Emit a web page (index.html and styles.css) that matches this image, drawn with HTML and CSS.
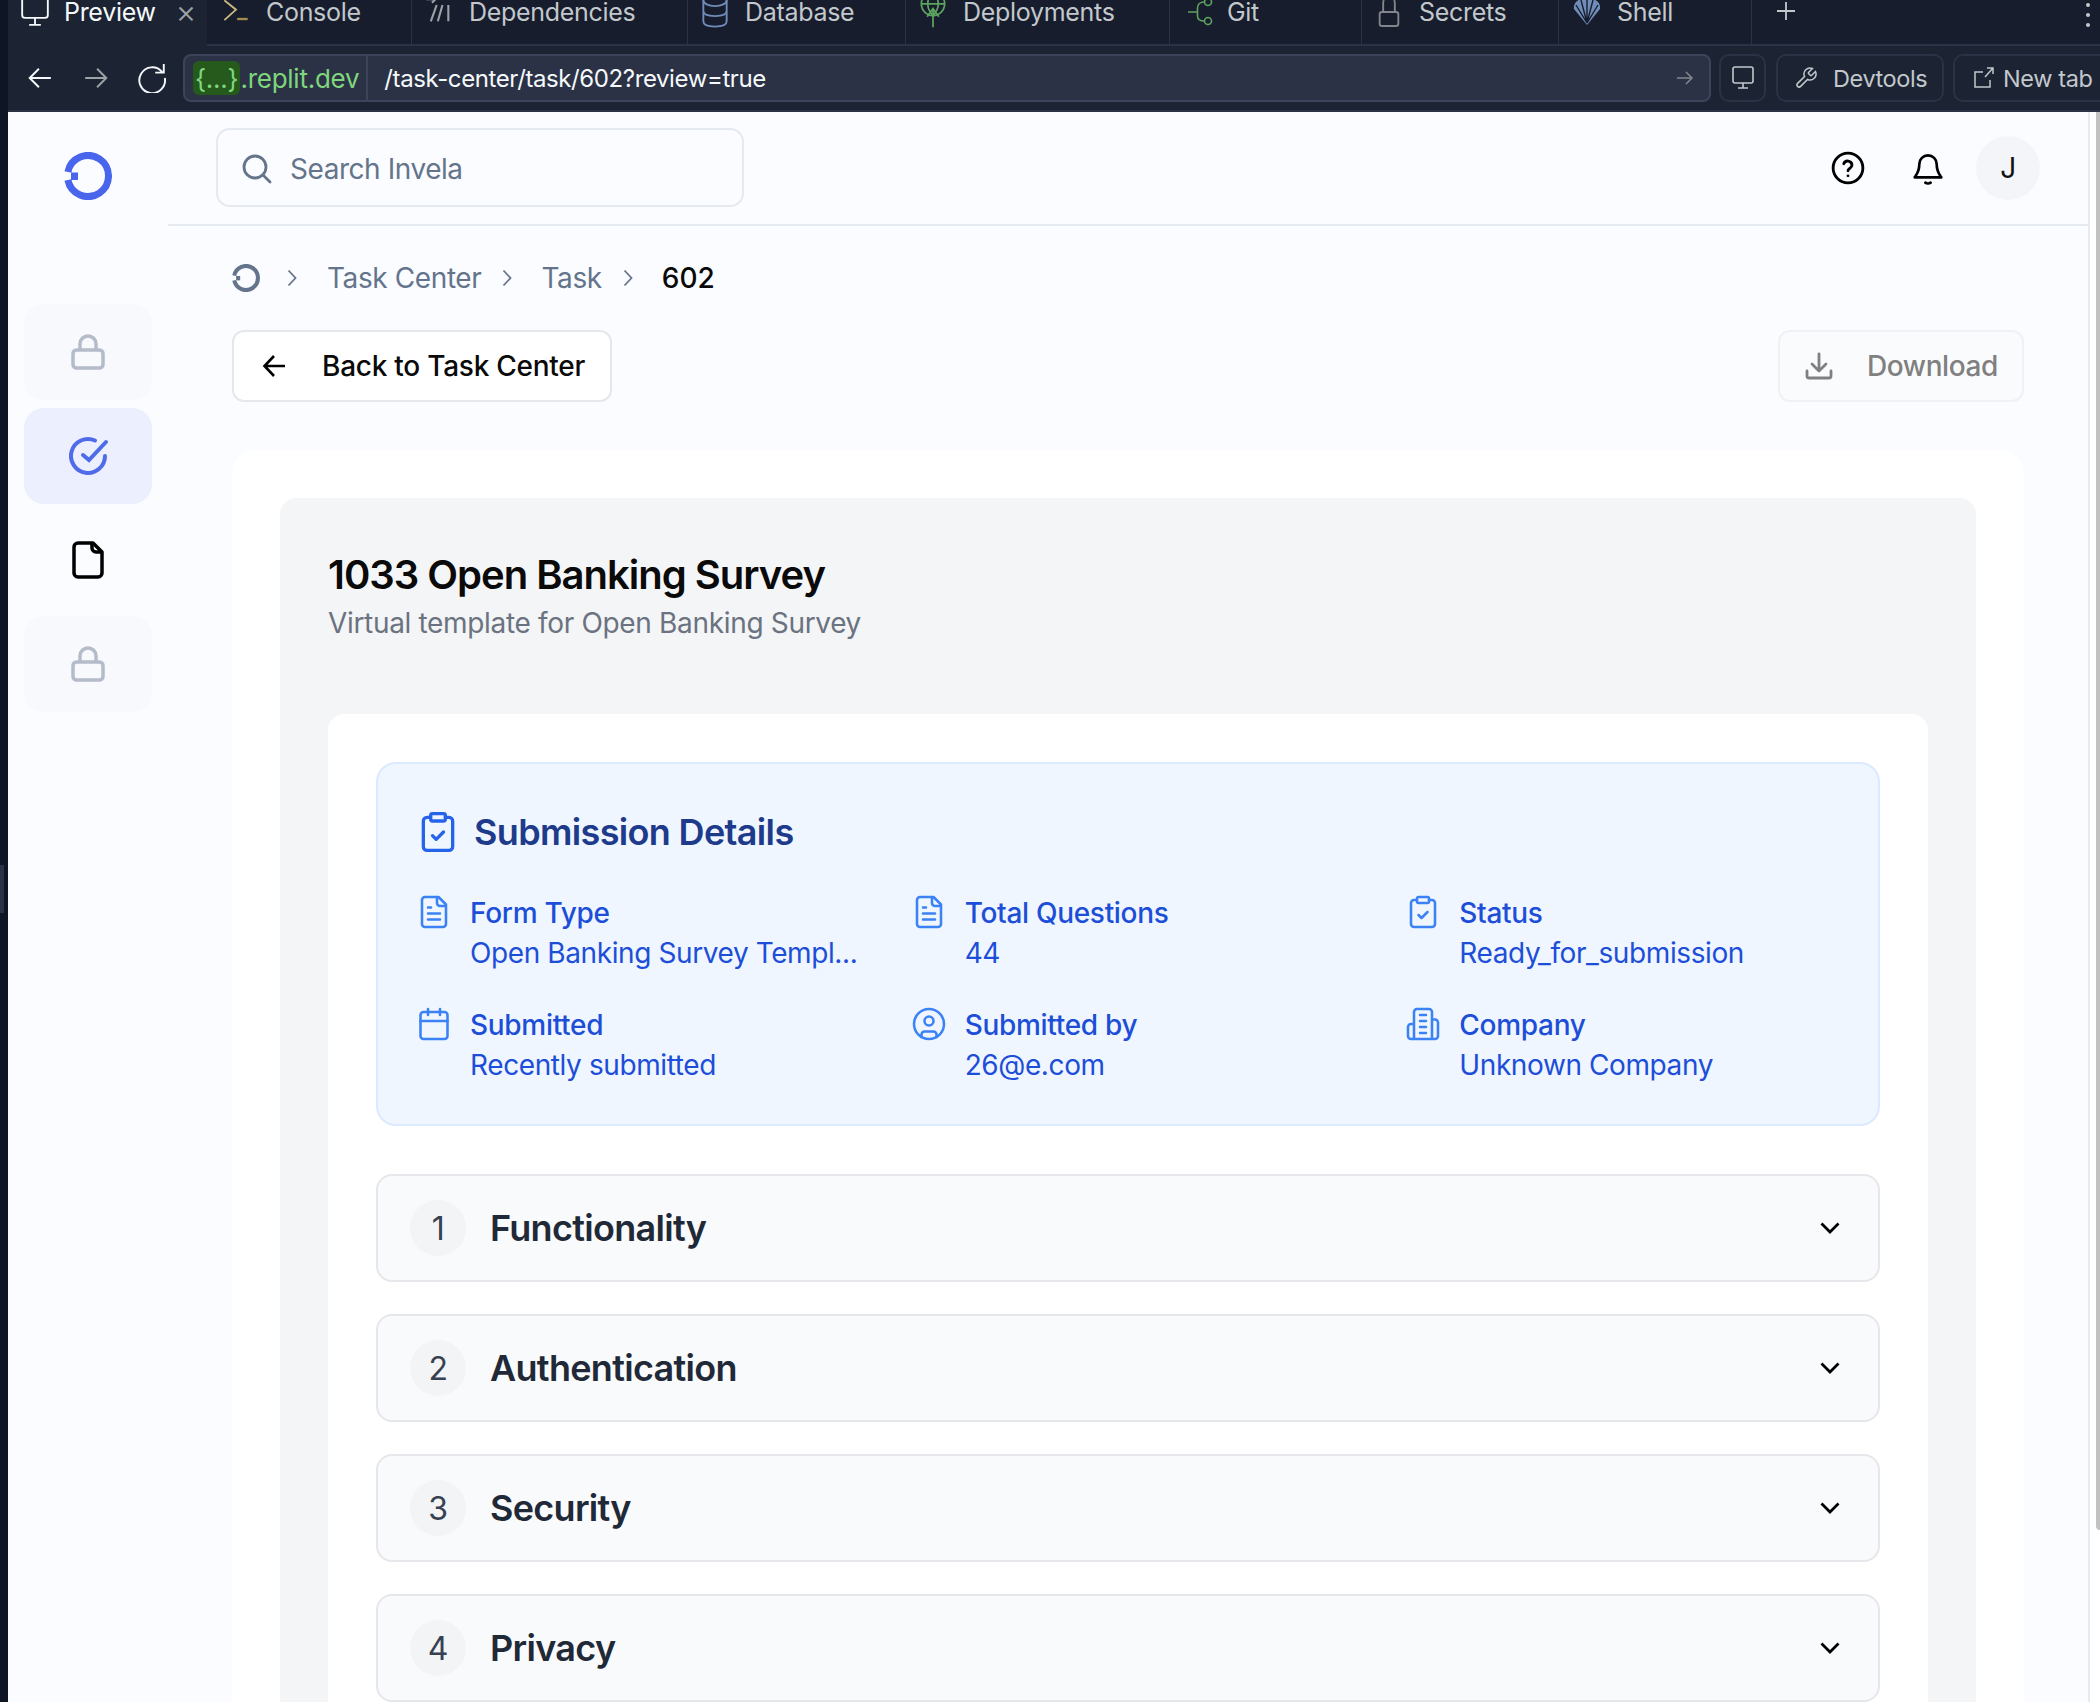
FILE: index.html

```html
<!DOCTYPE html>
<html lang="en">
  <head>
    <meta charset="utf-8">
    <title>Invela - Task 602</title>
    <link rel="stylesheet" href="styles.css">
  </head>
  <body>
    <div class="drag-handle"></div>

    <!-- Replit tab strip -->
    <div class="tabs">
      <div class="tab tab-active tab-preview">
        <svg class="tab-icon" viewBox="0 0 24 24" fill="none" stroke="#f5f9fc" stroke-width="1.6"><rect x="1" y="-2" width="22" height="19" rx="2.500"/><path d="M12 17v6M7 23h10"/></svg>
        <span>Preview</span>
        <span class="tab-close">×</span>
      </div>
      <div class="tab tab-console">
        <svg class="tab-icon" viewBox="0 0 24 24" fill="none" stroke="#c9b77d" stroke-width="1.6"><path d="M2 2l10 8-10 9"/><path d="M13 18h9" stroke="#a38d4a" stroke-width="2"/></svg>
        <span>Console</span>
      </div>
      <div class="tab tab-deps">
        <svg class="tab-icon" viewBox="0 0 24 24" fill="none" stroke="#9da2a6" stroke-width="1.8"><path d="M10 6L5 20M15 6l-4 14M20 6v14M1 1h7M5.500 -2L9 1 6 4"/></svg>
        <span>Dependencies</span>
      </div>
      <div class="tab tab-db">
        <svg class="tab-icon" viewBox="0 0 24 24" fill="none" stroke="#6f8db8" stroke-width="1.6"><ellipse cx="12" cy="2" rx="10" ry="5"/><path d="M2 2v18c0 3 4 4.500 10 4.500s10-1.500 10-4.500V2M2 11c0 3 4 4.500 10 4.500s10-1.500 10-4.500"/></svg>
        <span>Database</span>
      </div>
      <div class="tab tab-deploy">
        <svg class="tab-icon" viewBox="0 0 24 24" fill="none" stroke="#5da35f" stroke-width="1.5"><circle cx="12" cy="5" r="10"/><path d="M2 5h20M12 -5c-6 6-6 14 0 20M12 -5c6 6 6 14 0 20M12 25V9M7 16l5-7 5 7"/></svg>
        <span>Deployments</span>
      </div>
      <div class="tab tab-git">
        <svg class="tab-icon" viewBox="0 0 28 24" fill="none" stroke="#5da35f" stroke-width="1.6"><circle cx="21" cy="2" r="3.500"/><circle cx="21" cy="21" r="3.500"/><path d="M1 12h9M17.500 2c-5 0-7 3-7 6v8c0 3 2 5 7 5"/></svg>
        <span>Git</span>
      </div>
      <div class="tab tab-secrets">
        <svg class="tab-icon" viewBox="0 0 24 24" fill="none" stroke="#82868c" stroke-width="1.6"><path d="M7 12V5c0-4 2-7 5-7s5 3 5 7v7"/><rect x="4" y="12" width="16" height="12" rx="2"/></svg>
        <span>Secrets</span>
      </div>
      <div class="tab tab-shell">
        <svg class="tab-icon" viewBox="0 0 28 28" fill="#6f8db8"><path d="M14 27L1 11C0 5 5 0 14 0s14 5 13 11z"/><path d="M14 25L8 2M14 25V1M14 25l6-23M14 25L3 7M14 25L25 7" stroke="#171d2d" stroke-width="1.400"/></svg>
        <span>Shell</span>
      </div>
      <div class="tab-add">
        <svg width="20" height="20" viewBox="0 0 20 20" stroke="#c2c8cc" stroke-width="1.800"><path d="M10 1v18M1 10h18"/></svg>
      </div>
      <div class="tab-more"><i></i><i></i><i></i></div>
    </div>

    <!-- address bar -->
    <div class="navbar">
      <svg class="nav-btn" viewBox="0 0 24 24" fill="none" stroke="#f5f9fc" stroke-width="1.800"><path d="M22 12H3M11 3.500L2.500 12l8.500 8.500"/></svg>
      <svg class="nav-btn nav-forward" viewBox="0 0 24 24" fill="none" stroke="#9da2a6" stroke-width="1.800"><path d="M2 12h19M13 3.500l8.500 8.500-8.500 8.500"/></svg>
      <svg class="nav-btn nav-reload" viewBox="0 0 28 28" fill="none" stroke="#f5f9fc" stroke-width="1.800"><path d="M23.500 8.500A12 12 0 1 0 26 14M25 1v8h-8"/></svg>
      <div class="urlbar">
        <span class="url-domain"><span class="url-pill">{...}</span>.replit.dev</span>
        <span class="url-path">/task-center/task/602?review=true</span>
        <svg class="url-go" viewBox="0 0 18 18" fill="none" stroke="#82868c" stroke-width="1.500"><path d="M1 9h15M10 3l6 6-6 6"/></svg>
      </div>
      <div class="nav-box nav-monitor">
        <svg width="24" height="26" viewBox="0 0 24 26" fill="none" stroke="#c2c8cc" stroke-width="1.600"><rect x="2" y="2" width="20" height="16" rx="2"/><path d="M12 18v5M7 23h10"/></svg>
      </div>
      <div class="nav-box nav-devtools">
        <svg width="24" height="28" viewBox="0 0 24 24" fill="none" stroke="#c2c8cc" stroke-width="1.500"><path d="M14.700 6.300a1 1 0 0 0 0 1.400l1.600 1.600a1 1 0 0 0 1.400 0l3.770-3.770a6 6 0 0 1-7.940 7.940l-6.910 6.910a2.120 2.120 0 0 1-3-3l6.910-6.910a6 6 0 0 1 7.940-7.940l-3.760 3.760z"/></svg>
        <span>Devtools</span>
      </div>
      <div class="nav-box nav-newtab">
        <svg width="22" height="24" viewBox="0 0 22 24" fill="none" stroke="#c2c8cc" stroke-width="1.500"><path d="M17 14v7H2V6h8M12 11L20 2M14 2h6v6"/></svg>
        <span>New tab</span>
      </div>
    </div>

    <div class="app">
      <div class="sidebar">
        <div class="logo">
          <svg width="48" height="48" viewBox="0 0 48 48" fill="none"><path d="M3.900 28A20.500 20.500 0 1 0 3.900 20" stroke="#4965ec" stroke-width="7"/><rect x="7" y="20.500" width="7" height="7.500" fill="#4965ec"/></svg>
        </div>
        <div class="nav-item nav-locked">
          <svg class="lock-icon" viewBox="0 0 34 36" fill="none" stroke="#b4bbc9" stroke-width="3.500"><path d="M9 16V10a8 8 0 0 1 16 0v6"/><rect x="2" y="16" width="30" height="18" rx="3.500"/></svg>
        </div>
        <div class="nav-item nav-active">
          <svg class="check-icon" width="40" height="40" viewBox="0 0 40 40" fill="none" stroke="#4f6bea" stroke-width="4" stroke-linecap="round"><path d="M36 20A17 17 0 1 1 26 4.500"/><path d="M14 19l6 5L37 6"/></svg>
        </div>
        <div class="nav-item">
          <svg width="32" height="38" viewBox="0 0 32 38" fill="none" stroke="#000" stroke-width="3.500" stroke-linejoin="round"><path d="M21 2H6a4 4 0 0 0-4 4v26a4 4 0 0 0 4 4h20a4 4 0 0 0 4-4V11z"/><path d="M20 2v5a4 4 0 0 0 4 4h6"/></svg>
        </div>
        <div class="nav-item nav-locked">
          <svg class="lock-icon" viewBox="0 0 34 36" fill="none" stroke="#b4bbc9" stroke-width="3.500"><path d="M9 16V10a8 8 0 0 1 16 0v6"/><rect x="2" y="16" width="30" height="18" rx="3.500"/></svg>
        </div>
      </div>

      <div class="content">
        <div class="topbar">
          <div class="search">
            <svg width="32" height="32" viewBox="0 0 32 32" fill="none" stroke="#64748b" stroke-width="2.800" stroke-linecap="round"><circle cx="14" cy="14" r="11"/><path d="M22 22l7 7"/></svg>
            <span>Search Invela</span>
          </div>
          <div class="top-actions">
            <svg class="help-icon" width="34" height="34" viewBox="0 0 24 24" fill="none" stroke="#000" stroke-width="2" stroke-linecap="round"><circle cx="12" cy="12" r="10.500"/><path d="M9 9a3 3 0 0 1 5.800 1c0 2-2.800 2.500-2.800 4M12 17.500h.01"/></svg>
            <svg width="32" height="34" viewBox="0 0 24 24" fill="none" stroke="#000" stroke-width="2" stroke-linecap="round" stroke-linejoin="round"><path d="M5.500 9a6.500 6.500 0 0 1 13 0c0 6 2.500 8.500 3.500 10H2c1-1.500 3.500-4 3.500-10zM10 23c1 .7 3 .7 4 0"/></svg>
            <div class="avatar">J</div>
          </div>
        </div>

        <div class="page">
          <div class="crumbs">
            <svg width="28" height="28" viewBox="0 0 48 48" fill="none"><path d="M3.900 28A20.500 20.500 0 1 0 3.900 20" stroke="#64748b" stroke-width="7"/><rect x="7" y="20.500" width="7" height="7.500" fill="#64748b"/></svg>
            <svg class="crumb-sep crumb-sep-first" viewBox="0 0 10 18" fill="none" stroke="#64748b" stroke-width="1.800"><path d="M1.500 1.500L8.500 9l-7 7.500"/></svg>
            <span>Task Center</span>
            <svg class="crumb-sep" viewBox="0 0 10 18" fill="none" stroke="#64748b" stroke-width="1.800"><path d="M1.500 1.500L8.500 9l-7 7.500"/></svg>
            <span>Task</span>
            <svg class="crumb-sep" viewBox="0 0 10 18" fill="none" stroke="#64748b" stroke-width="1.800"><path d="M1.500 1.500L8.500 9l-7 7.500"/></svg>
            <span class="crumb-current">602</span>
          </div>

          <div class="actions">
            <div class="btn btn-back">
              <svg width="24" height="24" viewBox="0 0 24 24" fill="none" stroke="#000" stroke-width="2.600"><path d="M23 12H3M12 2L2.500 12 12 22"/></svg>
              <span>Back to Task Center</span>
            </div>
            <div class="btn btn-download">
              <svg width="28" height="28" viewBox="0 0 28 28" fill="none" stroke="#808080" stroke-width="2.800" stroke-linecap="round" stroke-linejoin="round"><path d="M14 2v16M7 12l7 7 7-7M2 19v5a2 2 0 0 0 2 2h20a2 2 0 0 0 2-2v-5"/></svg>
              <span>Download</span>
            </div>
          </div>

          <div class="sheet">
            <div class="panel">
              <h1>1033 Open Banking Survey</h1>
              <p class="subtitle">Virtual template for Open Banking Survey</p>

              <div class="form-card">
                <div class="details">
                  <div class="details-head">
                    <svg width="44" height="44" viewBox="0 0 24 24" fill="none" stroke="#2563eb" stroke-width="1.800" stroke-linecap="round" stroke-linejoin="round"><rect x="8" y="2" width="8" height="4" rx="1"/><path d="M16 4h2a2 2 0 0 1 2 2v14a2 2 0 0 1-2 2H6a2 2 0 0 1-2-2V6a2 2 0 0 1 2-2h2M9 14l2 2 4-4"/></svg>
                    <h2>Submission Details</h2>
                  </div>
                  <div class="details-grid">
                    <div class="detail">
                      <svg class="detail-icon" viewBox="0 0 24 24" fill="none" stroke="#3b82f6" stroke-width="1.700" stroke-linecap="round" stroke-linejoin="round"><path d="M15 2H6a2 2 0 0 0-2 2v16a2 2 0 0 0 2 2h12a2 2 0 0 0 2-2V7zM14 2v4a2 2 0 0 0 2 2h4M10 9H8M16 13H8M16 17H8"/></svg>
                      <div><div class="detail-label">Form Type</div><div class="detail-value">Open Banking Survey Templ...</div></div>
                    </div>
                    <div class="detail">
                      <svg class="detail-icon" viewBox="0 0 24 24" fill="none" stroke="#3b82f6" stroke-width="1.700" stroke-linecap="round" stroke-linejoin="round"><path d="M15 2H6a2 2 0 0 0-2 2v16a2 2 0 0 0 2 2h12a2 2 0 0 0 2-2V7zM14 2v4a2 2 0 0 0 2 2h4M10 9H8M16 13H8M16 17H8"/></svg>
                      <div><div class="detail-label">Total Questions</div><div class="detail-value">44</div></div>
                    </div>
                    <div class="detail">
                      <svg class="detail-icon" viewBox="0 0 24 24" fill="none" stroke="#3b82f6" stroke-width="1.700" stroke-linecap="round" stroke-linejoin="round"><rect x="8" y="2" width="8" height="4" rx="1"/><path d="M16 4h2a2 2 0 0 1 2 2v14a2 2 0 0 1-2 2H6a2 2 0 0 1-2-2V6a2 2 0 0 1 2-2h2M9 14l2 2 4-4"/></svg>
                      <div><div class="detail-label">Status</div><div class="detail-value">Ready_for_submission</div></div>
                    </div>
                    <div class="detail">
                      <svg class="detail-icon" viewBox="0 0 24 24" fill="none" stroke="#3b82f6" stroke-width="1.700" stroke-linecap="round" stroke-linejoin="round"><rect x="3" y="4" width="18" height="18" rx="2"/><path d="M8 2v4M16 2v4M3 10h18"/></svg>
                      <div><div class="detail-label">Submitted</div><div class="detail-value">Recently submitted</div></div>
                    </div>
                    <div class="detail">
                      <svg class="detail-icon" viewBox="0 0 24 24" fill="none" stroke="#3b82f6" stroke-width="1.700" stroke-linecap="round" stroke-linejoin="round"><circle cx="12" cy="12" r="10"/><circle cx="12" cy="10" r="3"/><path d="M7 20.700V19a2 2 0 0 1 2-2h6a2 2 0 0 1 2 2v1.700"/></svg>
                      <div><div class="detail-label">Submitted by</div><div class="detail-value">26@e.com</div></div>
                    </div>
                    <div class="detail">
                      <svg class="detail-icon" viewBox="0 0 24 24" fill="none" stroke="#3b82f6" stroke-width="1.700" stroke-linecap="round" stroke-linejoin="round"><path d="M6 22V4a2 2 0 0 1 2-2h8a2 2 0 0 1 2 2v18zM6 12H4a2 2 0 0 0-2 2v6a2 2 0 0 0 2 2h2M18 9h2a2 2 0 0 1 2 2v9a2 2 0 0 1-2 2h-2M10 6h4M10 10h4M10 14h4M10 18h4"/></svg>
                      <div><div class="detail-label">Company</div><div class="detail-value">Unknown Company</div></div>
                    </div>
                  </div>
                </div>

                <div class="section">
                  <div class="section-num">1</div>
                  <div class="section-title">Functionality</div>
                  <svg class="chevron" viewBox="0 0 20 12" fill="none" stroke="#000" stroke-width="2.800"><path d="M1.500 1.500L10 10l8.500-8.500"/></svg>
                </div>
                <div class="section">
                  <div class="section-num">2</div>
                  <div class="section-title">Authentication</div>
                  <svg class="chevron" viewBox="0 0 20 12" fill="none" stroke="#000" stroke-width="2.800"><path d="M1.500 1.500L10 10l8.500-8.500"/></svg>
                </div>
                <div class="section">
                  <div class="section-num">3</div>
                  <div class="section-title">Security</div>
                  <svg class="chevron" viewBox="0 0 20 12" fill="none" stroke="#000" stroke-width="2.800"><path d="M1.500 1.500L10 10l8.500-8.500"/></svg>
                </div>
                <div class="section">
                  <div class="section-num">4</div>
                  <div class="section-title">Privacy</div>
                  <svg class="chevron" viewBox="0 0 20 12" fill="none" stroke="#000" stroke-width="2.800"><path d="M1.500 1.500L10 10l8.500-8.500"/></svg>
                </div>
              </div>
            </div>
          </div>
        </div>
      </div>

      <div class="scroll-track"><div class="scroll-thumb"></div></div>
    </div>
  </body>
</html>
```

FILE: styles.css

```css
* {
  box-sizing: border-box;
}

html,
body {
  margin: 0;
  height: 1702px;
  overflow: hidden;
}

body {
  background-color: #0e1525;
  font-family: Inter, "Liberation Sans", sans-serif;
  font-size: 28px;
  letter-spacing: -0.4px;
}

.drag-handle {
  position: absolute;
  left: 0;
  top: 865px;
  width: 4px;
  height: 48px;
  background-color: #2b3245;
}

/* Replit chrome */
.tabs {
  display: flex;
  height: 46px;
  margin-left: 8px;
  background-color: #171d2d;
  color: #c2c8cc;
  font-size: 25px;
  line-height: 24px;
  letter-spacing: -0.3px;
  overflow: hidden;
}

.tab {
  display: flex;
  align-items: center;
  height: 46px;
  padding-bottom: 20px;
  gap: 16px;
  border-right: 1px solid #2b3245;
  border-bottom: 2px solid #2b3245;
}

.tab-icon {
  width: 28px;
  height: 28px;
  flex-shrink: 0;
  overflow: visible;
}

.tab-active {
  background-color: #1c2333;
  color: #f5f9fc;
  border-bottom: 0;
  border-right: 0;
}

.tab-preview { width: 199px; padding-left: 13px; padding-bottom: 22px; gap: 15px; }
.tab-console { width: 205px; padding-left: 15px; }
.tab-deps { width: 276px; padding-left: 13px; }
.tab-db { width: 218px; padding-left: 13px; }
.tab-deploy { width: 264px; padding-left: 13px; }
.tab-git { width: 192px; padding-left: 17px; gap: 12px; }
.tab-secrets { width: 197px; padding-left: 13px; }
.tab-shell { width: 193px; padding-left: 14px; }

.tab-close {
  margin-left: auto;
  margin-right: 11px;
  font-size: 32px;
  font-weight: 300;
  color: #9da2a6;
}

.tab-add {
  flex: 1;
  height: 46px;
  padding-left: 24px;
  border-bottom: 2px solid #2b3245;
}

.tab-more {
  position: absolute;
  top: 0;
  right: 10px;
  display: flex;
  flex-direction: column;
  gap: 6px;
  padding-top: 3px;
}

.tab-more i {
  display: block;
  width: 4px;
  height: 4px;
  border-radius: 50%;
  background-color: #c2c8cc;
}

.navbar {
  display: flex;
  align-items: center;
  height: 66px;
  margin-left: 8px;
  background-color: #1c2333;
  border-bottom: 2px solid #2b3245;
  color: #c2c8cc;
  overflow: hidden;
}

.nav-btn {
  width: 26px;
  height: 26px;
  margin-left: 19px;
  flex-shrink: 0;
}

.nav-forward { margin-left: 30px; }
.nav-reload { width: 30px; height: 30px; margin-left: 28px; margin-right: 16px; }

.urlbar {
  display: flex;
  align-items: center;
  flex-shrink: 0;
  width: 1528px;
  height: 48px;
  padding: 0 15px 0 8px;
  background-color: #2b3245;
  border: 2px solid #3c445c;
  border-radius: 8px;
  font-size: 26px;
  letter-spacing: -0.25px;
}

.url-domain {
  display: flex;
  align-items: center;
  height: 44px;
  padding-right: 7px;
  border-right: 2px solid #3c445c;
  color: #7fd67c;
}

.url-pill {
  display: flex;
  align-items: center;
  height: 34px;
  padding: 0 2px;
  border-radius: 6px;
  background-color: #265a1c;
}

.url-path {
  margin-left: 16px;
  color: #f5f9fc;
  font-size: 24px;
  letter-spacing: -0.4px;
}

.url-go {
  width: 18px;
  height: 18px;
  margin-left: auto;
}

.nav-box {
  display: flex;
  align-items: center;
  flex-shrink: 0;
  height: 48px;
  margin-left: 10px;
  border: 2px solid #2b3245;
  border-radius: 10px;
  font-size: 23.500px;
}

.nav-monitor { width: 47px; justify-content: center; margin-left: 8px; }
.nav-devtools { width: 168px; padding-left: 16px; gap: 15px; }
.nav-newtab { width: 170px; padding-left: 18px; gap: 8px; margin-left: 9px; }

/* Invela app */
.app {
  display: flex;
  height: 1590px;
  margin-left: 8px;
  background-color: #fbfcff;
  overflow: hidden;
}

.sidebar {
  display: flex;
  flex-direction: column;
  align-items: center;
  width: 160px;
  flex-shrink: 0;
  gap: 8px;
}

.logo {
  height: 184px;
  padding-top: 40px;
}

.nav-item {
  display: flex;
  align-items: center;
  justify-content: center;
  width: 128px;
  height: 96px;
  border-radius: 20px;
}

.nav-locked { background-color: #f8f9fd; }
.nav-active { background-color: #ebeffe; }

.check-icon {
  margin-left: 2px;
}

.lock-icon {
  width: 34px;
  height: 36px;
}

.content {
  flex: 1;
  min-width: 0;
}

.topbar {
  display: flex;
  align-items: center;
  justify-content: space-between;
  height: 114px;
  padding: 0 48px;
  border-bottom: 2px solid #e6ebf1;
}

.search {
  display: flex;
  align-items: center;
  gap: 17px;
  width: 528px;
  height: 79px;
  margin-top: -2px;
  padding: 3px 0 0 23px;
  border: 2px solid #e5e9f0;
  border-radius: 14px;
  color: #64748b;
  letter-spacing: -0.45px;
}

.top-actions {
  display: flex;
  align-items: center;
  gap: 32px;
}

.help-icon {
  margin-right: 15px;
}

.avatar {
  display: flex;
  align-items: center;
  justify-content: center;
  width: 64px;
  height: 64px;
  border-radius: 50%;
  background-color: #f3f5f9;
  color: #111;
}

.page {
  padding: 35px 64px 0;
}

.crumbs {
  display: flex;
  align-items: center;
  height: 34px;
  color: #64748b;
  letter-spacing: -0.4px;
}

.crumb-sep {
  width: 10px;
  height: 18px;
  margin: 0 29px 0 21px;
}

.crumb-sep-first {
  margin: 0 30px 0 27px;
}

.crumb-current {
  color: #0a0a0a;
  font-weight: 500;
  letter-spacing: 0;
}

.actions {
  display: flex;
  justify-content: space-between;
  margin-top: 35px;
}

.btn {
  display: flex;
  align-items: center;
  height: 72px;
  border-radius: 12px;
  font-weight: 500;
  letter-spacing: -0.25px;
}

.btn-back {
  gap: 36px;
  width: 380px;
  padding-left: 28px;
  background-color: #fff;
  border: 2px solid #e5e7eb;
  color: #0a0a0a;
}

.btn-download {
  gap: 34px;
  width: 246px;
  padding-left: 25px;
  background-color: #fafbfd;
  border: 2px solid #eff1f5;
  color: #808080;
  letter-spacing: -0.4px;
}

.sheet {
  margin-top: 48px;
  padding: 48px 48px 0;
  height: 1252px;
  background-color: #fff;
  border-radius: 24px 24px 0 0;
  overflow: hidden;
}

.panel {
  height: 1204px;
  padding: 48px 48px 0;
  background-color: #f4f5f7;
  border-radius: 16px 16px 0 0;
  overflow: hidden;
}

.panel h1 {
  margin: 3px 0 0;
  color: #0a0a0a;
  font-size: 40px;
  line-height: 52px;
  font-weight: 600;
  letter-spacing: -1px;
}

.subtitle {
  margin: 0;
  color: #6b7280;
  line-height: 44px;
  letter-spacing: -0.33px;
}

.form-card {
  margin-top: 69px;
  padding: 48px;
  background-color: #fff;
  border-radius: 16px;
}

.details {
  height: 364px;
  padding: 36px 38px 0;
  background-color: #eff6ff;
  border: 2px solid #dbeafe;
  border-radius: 20px;
}

.details-head {
  display: flex;
  align-items: center;
  gap: 14px;
  height: 64px;
}

.details-head h2 {
  margin: 0;
  color: #1e3a8a;
  font-size: 36px;
  font-weight: 600;
  letter-spacing: -0.65px;
}

.details-grid {
  display: grid;
  grid-template-columns: repeat(3, minmax(0, 1fr));
  column-gap: 60px;
  row-gap: 32px;
  margin-top: 29px;
}

.detail {
  display: flex;
  gap: 18px;
  height: 80px;
}

.detail-icon {
  width: 36px;
  height: 36px;
  margin-top: 1px;
  flex-shrink: 0;
}

.detail-label {
  color: #1d4ed8;
  line-height: 40px;
  font-weight: 500;
  letter-spacing: -0.3px;
}

.detail-value {
  color: #1d4ed8;
  line-height: 40px;
  white-space: nowrap;
}

.section {
  display: flex;
  align-items: center;
  height: 108px;
  margin-top: 32px;
  padding: 0 38px 0 32px;
  background-color: #f9fafb;
  border: 2px solid #e5e7eb;
  border-radius: 16px;
}

.details + .section {
  margin-top: 48px;
}

.section-num {
  display: flex;
  align-items: center;
  justify-content: center;
  width: 56px;
  height: 56px;
  border-radius: 50%;
  background-color: #f3f4f6;
  color: #374151;
  font-size: 32px;
}

.section-title {
  flex: 1;
  margin-left: 24px;
  color: #1f2937;
  font-size: 36px;
  font-weight: 600;
  letter-spacing: -0.7px;
}

.chevron {
  width: 20px;
  height: 12px;
}

.scroll-track {
  width: 12px;
  flex-shrink: 0;
  padding-left: 6px;
  background-color: #fff;
  border-left: 2px solid #e6ebf1;
}

.scroll-thumb {
  width: 4px;
  height: 1418px;
  background-color: #c1c1c1;
  border-bottom-left-radius: 4px;
}
```
